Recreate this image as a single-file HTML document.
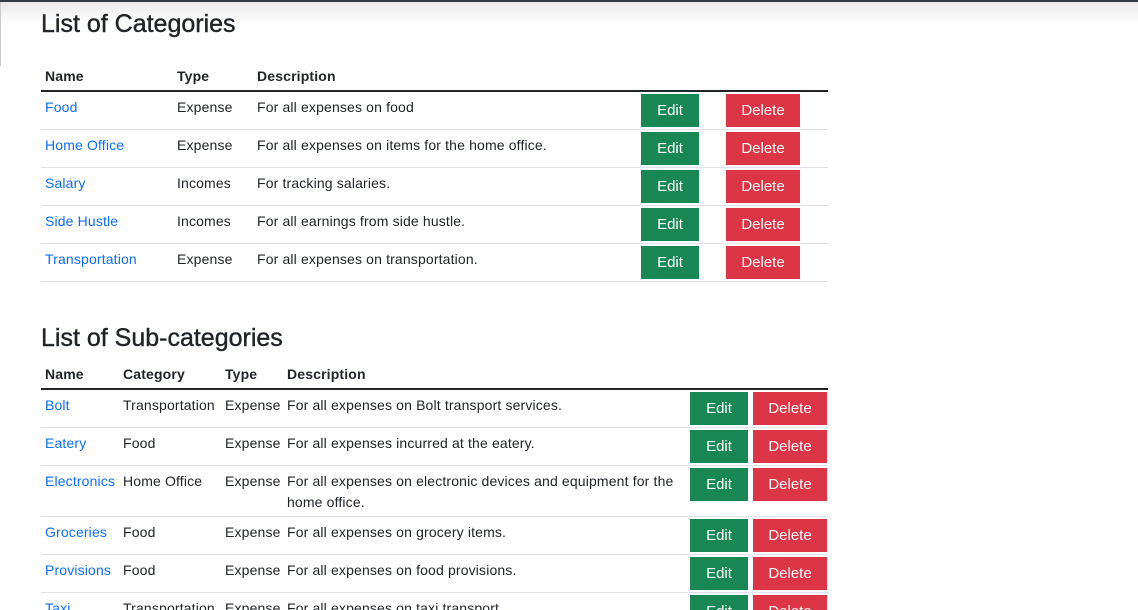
<!DOCTYPE html>
<html><head><meta charset="utf-8"><style>
*{margin:0;padding:0;box-sizing:border-box}
html,body{width:1138px;height:610px;overflow:hidden;background:#fff}
body{position:relative;font-family:"Liberation Sans","DejaVu Sans",sans-serif;font-size:14px;color:#212529}
.t{position:absolute;white-space:nowrap;line-height:20px;letter-spacing:0.15px}
.h{font-weight:bold}
.a{color:#0d6efd}
.h1{position:absolute;font-size:25px;line-height:30px;white-space:nowrap;letter-spacing:0;-webkit-text-stroke:0.4px #212529}
.ln{position:absolute;height:1px;background:#dee2e6}
.th{position:absolute;height:2px;background:#212529}
.b{position:absolute;height:33px;color:#fff;font-size:15px;line-height:34px;text-align:center}
.e{background:#198754}
.d{background:#dc3545}
</style></head><body>
<div style="position:absolute;left:0;top:0;width:1138px;height:2px;background:#343a40"></div>
<div style="position:absolute;left:0;top:2px;width:1138px;height:22px;background:linear-gradient(#e9e9e9,#fff)"></div>
<div style="position:absolute;left:0;top:2px;width:1px;height:64px;background:#ccc"></div>

<div class="h1" style="left:41px;top:9px">List of Categories</div>
<div class="t h" style="left:45px;top:66px">Name</div>
<div class="t h" style="left:177px;top:66px">Type</div>
<div class="t h" style="left:257px;top:66px">Description</div>
<div class="th" style="left:41px;top:90px;width:787px"></div>

<div class="t a" style="left:45px;top:97px">Food</div><div class="t" style="left:177px;top:97px">Expense</div><div class="t" style="left:257px;top:97px">For all expenses on food</div>
<div class="b e" style="left:641px;top:94px;width:58px">Edit</div><div class="b d" style="left:726px;top:94px;width:74px">Delete</div>
<div class="ln" style="left:41px;top:129px;width:787px"></div>

<div class="t a" style="left:45px;top:135px">Home Office</div><div class="t" style="left:177px;top:135px">Expense</div><div class="t" style="left:257px;top:135px">For all expenses on items for the home office.</div>
<div class="b e" style="left:641px;top:132px;width:58px">Edit</div><div class="b d" style="left:726px;top:132px;width:74px">Delete</div>
<div class="ln" style="left:41px;top:167px;width:787px"></div>

<div class="t a" style="left:45px;top:173px">Salary</div><div class="t" style="left:177px;top:173px">Incomes</div><div class="t" style="left:257px;top:173px">For tracking salaries.</div>
<div class="b e" style="left:641px;top:170px;width:58px">Edit</div><div class="b d" style="left:726px;top:170px;width:74px">Delete</div>
<div class="ln" style="left:41px;top:205px;width:787px"></div>

<div class="t a" style="left:45px;top:211px">Side Hustle</div><div class="t" style="left:177px;top:211px">Incomes</div><div class="t" style="left:257px;top:211px">For all earnings from side hustle.</div>
<div class="b e" style="left:641px;top:208px;width:58px">Edit</div><div class="b d" style="left:726px;top:208px;width:74px">Delete</div>
<div class="ln" style="left:41px;top:243px;width:787px"></div>

<div class="t a" style="left:45px;top:249px">Transportation</div><div class="t" style="left:177px;top:249px">Expense</div><div class="t" style="left:257px;top:249px">For all expenses on transportation.</div>
<div class="b e" style="left:641px;top:246px;width:58px">Edit</div><div class="b d" style="left:726px;top:246px;width:74px">Delete</div>
<div class="ln" style="left:41px;top:281px;width:787px"></div>

<div class="h1" style="left:41px;top:323px">List of Sub-categories</div>
<div class="t h" style="left:45px;top:364px">Name</div>
<div class="t h" style="left:123px;top:364px">Category</div>
<div class="t h" style="left:225px;top:364px">Type</div>
<div class="t h" style="left:287px;top:364px">Description</div>
<div class="th" style="left:41px;top:388px;width:787px"></div>

<div class="t a" style="left:45px;top:395px">Bolt</div><div class="t" style="left:123px;top:395px">Transportation</div><div class="t" style="left:225px;top:395px">Expense</div><div class="t" style="left:287px;top:395px">For all expenses on Bolt transport services.</div>
<div class="b e" style="left:690px;top:392px;width:58px">Edit</div><div class="b d" style="left:753px;top:392px;width:74px">Delete</div>
<div class="ln" style="left:41px;top:427px;width:787px"></div>

<div class="t a" style="left:45px;top:433px">Eatery</div><div class="t" style="left:123px;top:433px">Food</div><div class="t" style="left:225px;top:433px">Expense</div><div class="t" style="left:287px;top:433px">For all expenses incurred at the eatery.</div>
<div class="b e" style="left:690px;top:430px;width:58px">Edit</div><div class="b d" style="left:753px;top:430px;width:74px">Delete</div>
<div class="ln" style="left:41px;top:465px;width:787px"></div>

<div class="t a" style="left:45px;top:471px">Electronics</div><div class="t" style="left:123px;top:471px">Home Office</div><div class="t" style="left:225px;top:471px">Expense</div><div class="t" style="left:287px;top:471px">For all expenses on electronic devices and equipment for the</div><div class="t" style="left:287px;top:492px">home office.</div>
<div class="b e" style="left:690px;top:468px;width:58px">Edit</div><div class="b d" style="left:753px;top:468px;width:74px">Delete</div>
<div class="ln" style="left:41px;top:516px;width:787px"></div>

<div class="t a" style="left:45px;top:522px">Groceries</div><div class="t" style="left:123px;top:522px">Food</div><div class="t" style="left:225px;top:522px">Expense</div><div class="t" style="left:287px;top:522px">For all expenses on grocery items.</div>
<div class="b e" style="left:690px;top:519px;width:58px">Edit</div><div class="b d" style="left:753px;top:519px;width:74px">Delete</div>
<div class="ln" style="left:41px;top:554px;width:787px"></div>

<div class="t a" style="left:45px;top:560px">Provisions</div><div class="t" style="left:123px;top:560px">Food</div><div class="t" style="left:225px;top:560px">Expense</div><div class="t" style="left:287px;top:560px">For all expenses on food provisions.</div>
<div class="b e" style="left:690px;top:557px;width:58px">Edit</div><div class="b d" style="left:753px;top:557px;width:74px">Delete</div>
<div class="ln" style="left:41px;top:592px;width:787px"></div>

<div class="t a" style="left:45px;top:598px">Taxi</div><div class="t" style="left:123px;top:598px">Transportation</div><div class="t" style="left:225px;top:598px">Expense</div><div class="t" style="left:287px;top:598px">For all expenses on taxi transport.</div>
<div class="b e" style="left:690px;top:595px;width:58px">Edit</div><div class="b d" style="left:753px;top:595px;width:74px">Delete</div>
</body></html>
